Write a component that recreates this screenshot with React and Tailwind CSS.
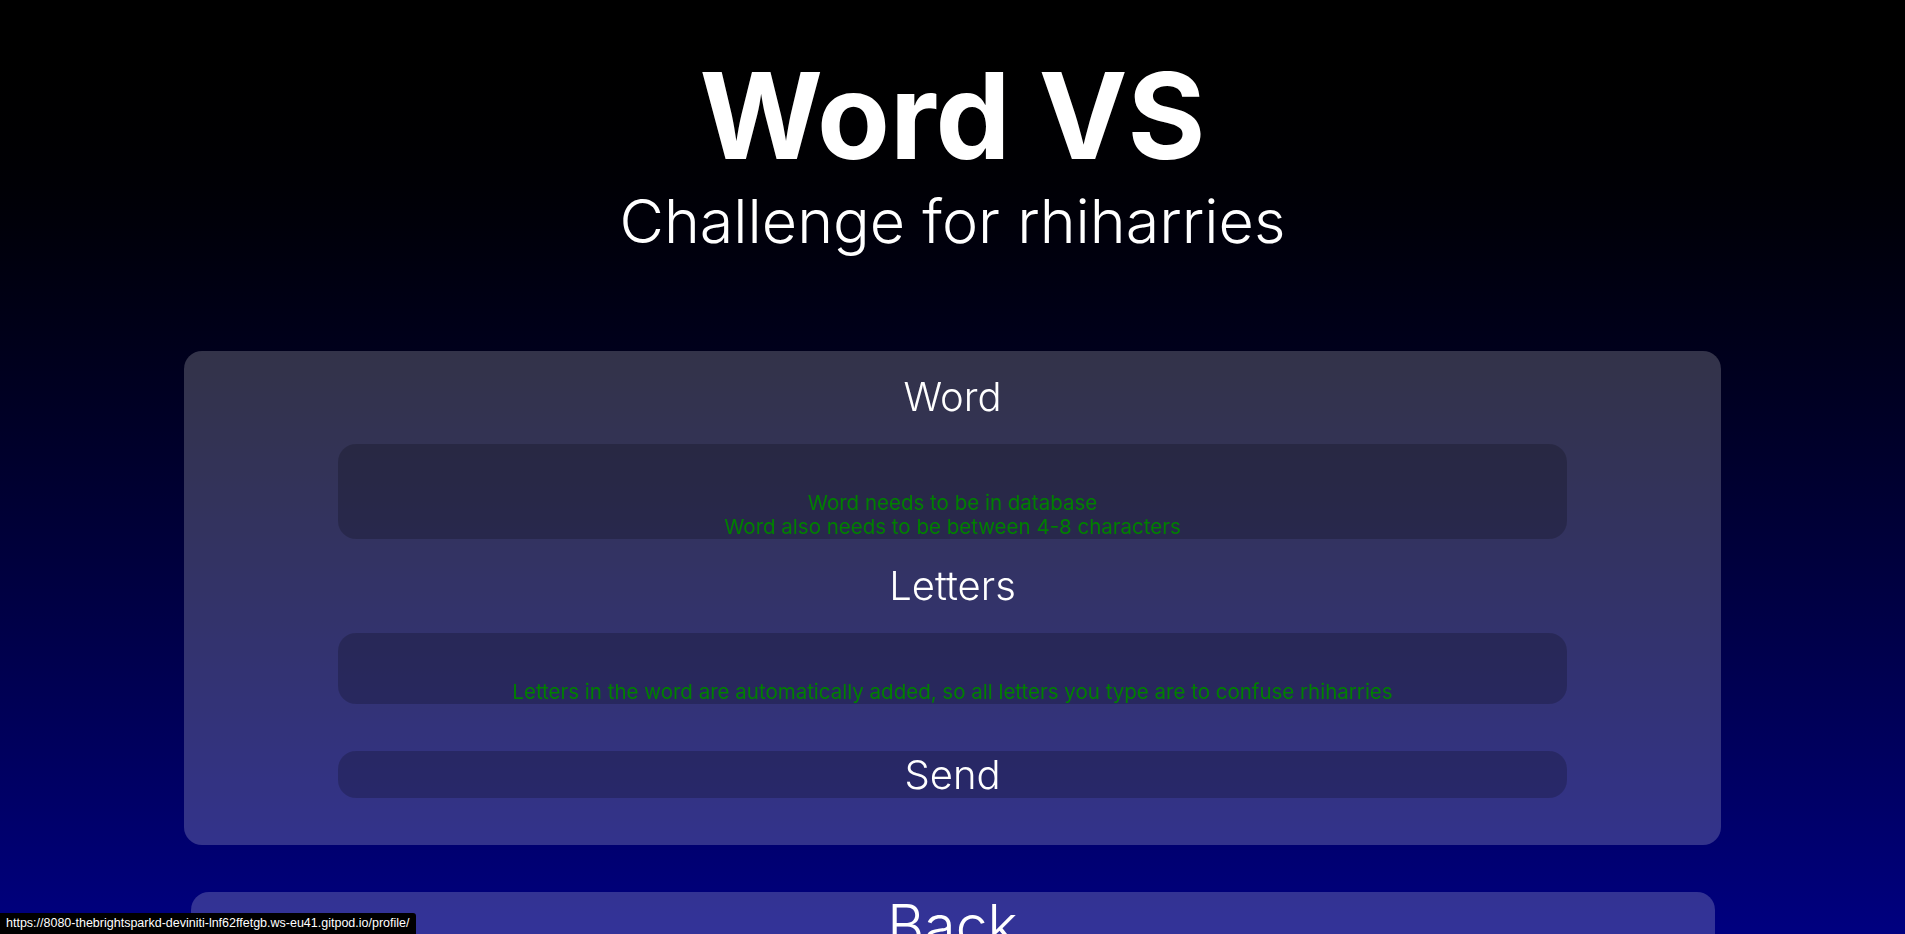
import React from "react";

const font = { fontFamily: "Inter, 'Noto Sans', sans-serif" };

function Label({ children }) {
  return <h2 className="text-[40px] font-light leading-[48px] text-white">{children}</h2>;
}

export default function App() {
  return (
    <div className="relative h-screen overflow-hidden bg-black" style={font}>
      <div className="fixed inset-0 bg-linear-to-b from-black to-[#000080]" />

      <div className="relative z-10 flex flex-col items-center">
        <header className="flex flex-col items-center pt-[57px] text-white">
          <h1 className="text-[119px] font-bold leading-none">Word VS</h1>
          <p className="mt-[15px] text-[61px] font-light leading-none">Challenge for rhiharries</p>
        </header>

        <form className="mt-[99px] flex w-[1537px] flex-col items-center rounded-[18px] bg-white/20 pt-[22px] pb-[47px] text-center">
          <Label>Word</Label>
          <div className="mt-[23px] flex h-[95px] w-4/5 flex-col justify-end rounded-[18px] bg-black/20 text-[20.5px] leading-[24px] text-[#008000]">
            <span>Word needs to be in database</span>
            <span>Word also needs to be between 4-8 characters</span>
          </div>

          <div className="mt-[23px]">
            <Label>Letters</Label>
          </div>
          <div className="mt-[23px] flex h-[71px] w-4/5 flex-col justify-end rounded-[18px] bg-black/20 text-[20.5px] leading-[24px] text-[#008000]">
            <span>Letters in the word are automatically added, so all letters you type are to confuse rhiharries</span>
          </div>

          <button
            type="button"
            className="mt-[47px] h-[47px] w-4/5 rounded-[18px] bg-black/20 text-[40px] font-light leading-[47px] text-white"
          >
            Send
          </button>
        </form>

        <button
          type="button"
          className="mt-[47px] w-4/5 rounded-[18px] bg-white/20 pb-[24px] text-[57px] font-light leading-[1.21] text-white"
        >
          Back
        </button>
      </div>

      <div
        className="fixed bottom-0 left-0 z-20 flex h-[21px] items-center rounded-tr-[3px] bg-black px-[6px] text-[12.5px] text-white"
        style={{ fontFamily: "'Liberation Sans', Arial, sans-serif" }}
      >
        https://8080-thebrightsparkd-deviniti-lnf62ffetgb.ws-eu41.gitpod.io/profile/
      </div>
    </div>
  );
}
